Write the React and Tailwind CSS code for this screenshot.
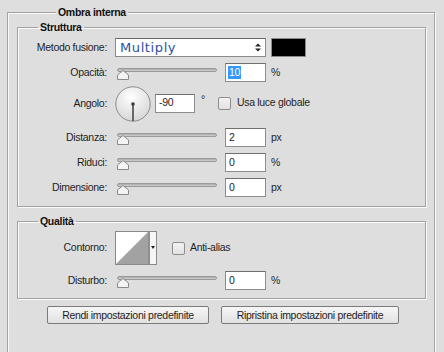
import React from "react";

const groove =
  "border border-[#a3a3a3] shadow-[inset_1px_1px_0_#fafafa,1px_1px_0_#fafafa]";

function Thumb() {
  return (
    <svg width="12" height="10" viewBox="0 0 12 10" className="absolute left-0 top-[2px]">
      <path d="M0.5 9.5 V5 L6 0.5 L11.5 5 V9.5 Z" fill="#f4f4f4" stroke="#8a8a8a" />
    </svg>
  );
}

function Slider() {
  return (
    <div className="relative h-[12px] w-[100px]">
      <div className="h-[4px] w-full rounded-full border border-[#9a9a9a] bg-gradient-to-b from-[#a9a9a9] to-[#d2d2d2]" />
      <Thumb />
    </div>
  );
}

function NumBox({ value, selected, w = "w-[41px]" }) {
  return (
    <div className={`flex h-[19px] ${w} items-center border border-[#8d8d8d] border-t-[#6f6f6f] bg-white pl-[2px]`}>
      {selected ? (
        <span className="bg-[#3399ff] px-[1px] leading-[13px] text-white">{value}</span>
      ) : (
        <span className="pl-[1px]">{value}</span>
      )}
    </div>
  );
}

function Checkbox() {
  return (
    <div className="h-[13px] w-[13px] rounded-[2px] border border-[#8e8e8e] bg-gradient-to-b from-[#f2f2f2] to-[#e2e2e2]" />
  );
}

function Label({ children }) {
  return <div className="w-[90px] pr-[1px] text-right">{children}</div>;
}

function SliderRow({ label, value, unit, selected, className = "" }) {
  return (
    <div className={`flex h-[19px] items-center ${className}`}>
      <Label>{label}</Label>
      <div className="ml-[9px] mt-[2px]">
        <Slider />
      </div>
      <div className="ml-[8px]">
        <NumBox value={value} selected={selected} />
      </div>
      <div className="ml-[5px]">{unit}</div>
    </div>
  );
}

function Dial() {
  return (
    <svg width="36" height="36" viewBox="0 0 36 36">
      <defs>
        <radialGradient id="dialFill" cx="0.45" cy="0.3" r="0.75">
          <stop offset="0" stopColor="#ffffff" />
          <stop offset="1" stopColor="#d4d4d4" />
        </radialGradient>
      </defs>
      <circle cx="18" cy="18" r="17.2" fill="url(#dialFill)" stroke="#8c8c8c" />
      <line x1="18" y1="18" x2="18" y2="35" stroke="#4a4a4a" strokeWidth="1.6" />
      <circle cx="18" cy="18" r="1.8" fill="#3a3a3a" />
    </svg>
  );
}

function ContourIcon() {
  return (
    <svg width="42" height="34" viewBox="0 0 42 34">
      <rect x="0.5" y="0.5" width="41" height="33" fill="#fff" stroke="#8a8a8a" />
      <polygon points="1,33 33,1 33,33" fill="#a2a2a2" />
      <rect x="33" y="1" width="2" height="32" fill="#8e8e8e" />
      <rect x="35" y="1" width="6" height="32" fill="#f6f6f6" />
      <polygon points="36,15 40,15 38,18" fill="#222" />
    </svg>
  );
}

function Button({ children, w }) {
  return (
    <button className={`h-[18px] ${w} rounded-[2px] border border-[#7b7b7b] bg-gradient-to-b from-[#f6f6f6] to-[#e1e1e1] text-center leading-[16px] text-[#1e1e1e]`}>
      {children}
    </button>
  );
}

export default function App() {
  return (
    <div className="h-[352px] w-[444px] overflow-hidden bg-[#dedede] pl-[7px] pt-[12px] font-['Liberation_Sans',Arial,sans-serif] text-[10.5px] tracking-[-0.3px] text-[#1e1e1e]">
      {/* Ombra interna */}
      <div className={`h-[400px] w-[428px] ${groove}`}>
        <div className="mt-[-7px] flex pl-[48px]">
          <div className="bg-[#dedede] px-[2px] font-bold leading-[13px] text-[#111]">
            Ombra interna
          </div>
        </div>

        <div className="pl-[9px]">
          {/* Struttura */}
          <fieldset className={`mt-[2px] w-[409px] p-0 pb-[9px] ${groove}`}>
            <legend className="ml-[20px] px-[2px] font-bold leading-[13px] text-[#111]">
              Struttura
            </legend>

            <div className="mt-[4px] flex h-[19px] items-center">
              <Label>Metodo fusione:</Label>
              <div className="ml-[7px] flex h-[19px] w-[151px] items-center justify-between border border-[#8a8a8a] border-t-[#6a6a6a] bg-white pl-[4px] pr-[4px]">
                <span className="font-['DejaVu_Sans',Verdana,sans-serif] text-[13px] tracking-[0.6px] text-[#2c4fa6]">
                  Multiply
                </span>
                <svg width="6" height="9" viewBox="0 0 6 9">
                  <polygon points="0,3.5 6,3.5 3,0.5" fill="#222" />
                  <polygon points="0,5.5 6,5.5 3,8.5" fill="#222" />
                </svg>
              </div>
              <div className="ml-[5px] h-[19px] w-[35px] border border-[#8a8a8a] bg-black" />
            </div>

            <SliderRow className="mt-[6px]" label="Opacità:" value="10" unit="%" selected />

            <div className="mt-[4px] flex h-[36px] items-center">
              <Label>Angolo:</Label>
              <div className="ml-[7px] flex">
                <Dial />
              </div>
              <div className="ml-[4px] mt-[-2px]">
                <NumBox value="-90" w="w-[40px]" />
              </div>
              <div className="ml-[6px] mt-[-8px]">°</div>
              <div className="ml-[13px] mt-[-2px]">
                <Checkbox />
              </div>
              <div className="ml-[6px] mt-[-2px]">Usa luce globale</div>
            </div>

            <SliderRow className="mt-[6px]" label="Distanza:" value="2" unit="px" />
            <SliderRow className="mt-[6px]" label="Riduci:" value="0" unit="%" />
            <SliderRow className="mt-[6px]" label="Dimensione:" value="0" unit="px" />
          </fieldset>

          {/* Qualità */}
          <fieldset className={`mt-[8px] w-[409px] p-0 pb-[8px] ${groove}`}>
            <legend className="ml-[20px] px-[2px] font-bold leading-[13px] text-[#111]">
              Qualità
            </legend>

            <div className="mt-[3px] flex h-[34px] items-center">
              <Label>Contorno:</Label>
              <div className="ml-[7px] flex">
                <ContourIcon />
              </div>
              <div className="ml-[15px]">
                <Checkbox />
              </div>
              <div className="ml-[5px]">Anti-alias</div>
            </div>

            <SliderRow className="mt-[6px]" label="Disturbo:" value="0" unit="%" />
          </fieldset>

          <div className="ml-[30px] mt-[7px] flex gap-[12px]">
            <Button w="w-[162px]">Rendi impostazioni predefinite</Button>
            <Button w="w-[178px]">Ripristina impostazioni predefinite</Button>
          </div>
        </div>
      </div>
    </div>
  );
}
